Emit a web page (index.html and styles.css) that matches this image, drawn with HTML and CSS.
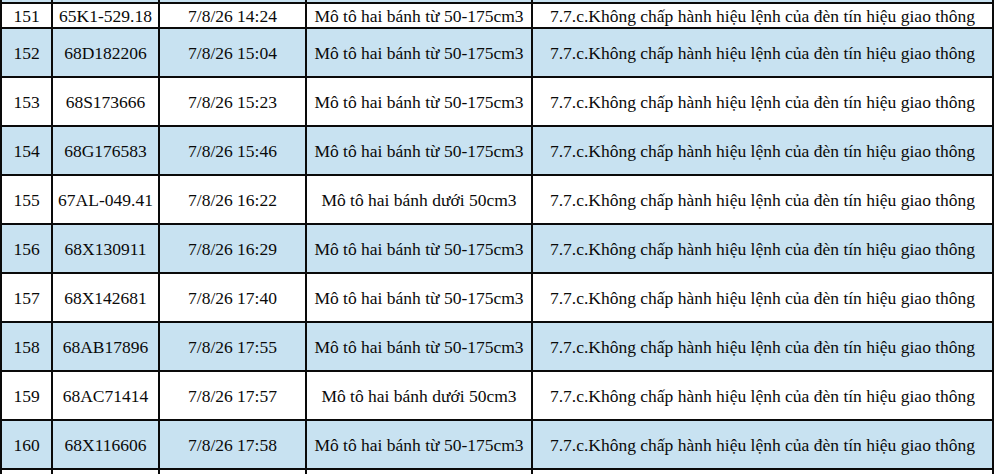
FILE: index.html
```html
<!DOCTYPE html>
<html>
<head>
<meta charset="utf-8">
<link rel="stylesheet" href="styles.css">
</head>
<body>
<div class="sheet">
<table class="grid">
<colgroup>
<col class="c1"><col class="c2"><col class="c3"><col class="c4"><col class="c5">
</colgroup>
<tbody>
<tr class="edge-top blue"><td></td><td></td><td></td><td></td><td></td></tr>
<tr class="short"><td>151</td><td>65K1-529.18</td><td>7/8/26 14:24</td><td>Mô tô hai bánh từ 50-175cm3</td><td>7.7.c.Không chấp hành hiệu lệnh của đèn tín hiệu giao thông</td></tr>
<tr class="row blue"><td>152</td><td>68D182206</td><td>7/8/26 15:04</td><td>Mô tô hai bánh từ 50-175cm3</td><td>7.7.c.Không chấp hành hiệu lệnh của đèn tín hiệu giao thông</td></tr>
<tr class="row"><td>153</td><td>68S173666</td><td>7/8/26 15:23</td><td>Mô tô hai bánh từ 50-175cm3</td><td>7.7.c.Không chấp hành hiệu lệnh của đèn tín hiệu giao thông</td></tr>
<tr class="row blue"><td>154</td><td>68G176583</td><td>7/8/26 15:46</td><td>Mô tô hai bánh từ 50-175cm3</td><td>7.7.c.Không chấp hành hiệu lệnh của đèn tín hiệu giao thông</td></tr>
<tr class="row"><td>155</td><td>67AL-049.41</td><td>7/8/26 16:22</td><td>Mô tô hai bánh dưới 50cm3</td><td>7.7.c.Không chấp hành hiệu lệnh của đèn tín hiệu giao thông</td></tr>
<tr class="row blue"><td>156</td><td>68X130911</td><td>7/8/26 16:29</td><td>Mô tô hai bánh từ 50-175cm3</td><td>7.7.c.Không chấp hành hiệu lệnh của đèn tín hiệu giao thông</td></tr>
<tr class="row"><td>157</td><td>68X142681</td><td>7/8/26 17:40</td><td>Mô tô hai bánh từ 50-175cm3</td><td>7.7.c.Không chấp hành hiệu lệnh của đèn tín hiệu giao thông</td></tr>
<tr class="row blue"><td>158</td><td>68AB17896</td><td>7/8/26 17:55</td><td>Mô tô hai bánh từ 50-175cm3</td><td>7.7.c.Không chấp hành hiệu lệnh của đèn tín hiệu giao thông</td></tr>
<tr class="row"><td>159</td><td>68AC71414</td><td>7/8/26 17:57</td><td>Mô tô hai bánh dưới 50cm3</td><td>7.7.c.Không chấp hành hiệu lệnh của đèn tín hiệu giao thông</td></tr>
<tr class="row blue"><td>160</td><td>68X116606</td><td>7/8/26 17:58</td><td>Mô tô hai bánh từ 50-175cm3</td><td>7.7.c.Không chấp hành hiệu lệnh của đèn tín hiệu giao thông</td></tr>
<tr class="row"><td></td><td></td><td></td><td></td><td></td></tr>
</tbody>
</table>
</div>
</body>
</html>
```
FILE: styles.css
```css
html, body {
  margin: 0;
  padding: 0;
  background: #ffffff;
}
.sheet {
  width: 998px;
  height: 474px;
  overflow: hidden;
}
.grid {
  border-collapse: collapse;
  table-layout: fixed;
  width: 994px;
  font-family: "Liberation Serif", "Times New Roman", serif;
  font-size: 17.5px;
  color: #0a0a0a;
}
.c1 { width: 51px; }
.c2 { width: 107px; }
.c3 { width: 147px; }
.c4 { width: 226px; }
.c5 { width: 461px; }
.grid td {
  border: 2px solid #0a0a0a;
  padding: 0;
  text-align: center;
  vertical-align: middle;
  white-space: nowrap;
  line-height: 20px;
}
.edge-top td {
  border-top: none;
  height: 2px;
}
.short td { height: 23px; }
.row td { height: 47px; }
.blue td { background: #c8e2f1; }
```
